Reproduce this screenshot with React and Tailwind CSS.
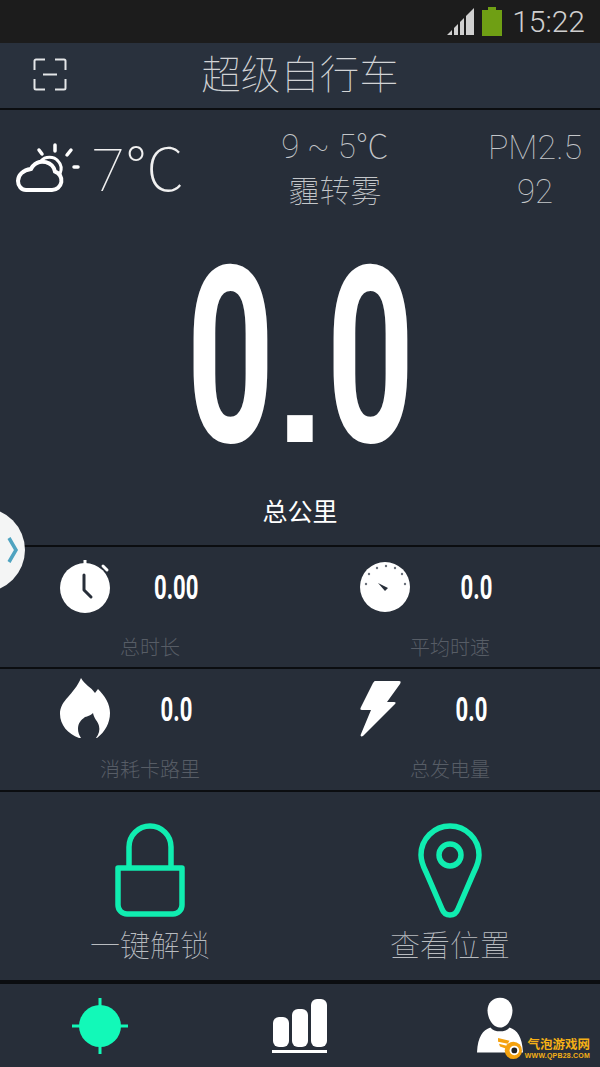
const cjk = "font-['Roboto','Noto_Sans_CJK_SC',sans-serif]"

function ScanIcon() {
  return (
    <svg width="34" height="33" viewBox="0 0 34 33" fill="none" stroke="#e4e6e8" strokeWidth="2">
      <path d="M12 1.500H3A1.500 1.500 0 0 0 1.500 3v9M22 1.500h9A1.500 1.500 0 0 1 32.500 3v9M12 31.500H3A1.500 1.500 0 0 1 1.500 30v-9M22 31.500h9a1.500 1.500 0 0 0 1.500-1.500v-9M10 16.500h14" />
    </svg>
  )
}

function WeatherIcon() {
  return (
    <svg width="66" height="52" viewBox="0 0 66 52" fill="none" stroke="#fff" strokeLinecap="round">
      <path d="M11 48h26a9.500 9.500 0 0 0 3-18.500C38 20 25 16 18 24c-1 1-1.500 2-2 3C8 28 3 33 3 39c0 5 3.500 9 8 9z" strokeWidth="4" />
      <path d="M26 19c4-5 13-5 17 0 3 3 4 8 2 13" strokeWidth="3" />
      <path d="M40 3v6M24 8l3 4M56 8l-4 5M59 25h4" strokeWidth="3.500" />
    </svg>
  )
}

function StopwatchIcon() {
  return (
    <svg width="52" height="54" viewBox="0 0 52 54" fill="none">
      <circle cx="26" cy="28" r="25" fill="#fff" />
      <path d="M26 0v4" stroke="#fff" strokeWidth="3" />
      <path d="M44 6l4 4" stroke="#fff" strokeWidth="3" strokeLinecap="round" />
      <path d="M25 15v15l7 7" stroke="#272e39" strokeWidth="3" strokeLinecap="round" strokeLinejoin="round" />
    </svg>
  )
}

function GaugeIcon() {
  const dots = [[7, 22], [10, 12], [18, 6], [27, 4], [36, 6], [43, 12], [46, 22]]
  return (
    <svg width="52" height="50" viewBox="0 0 52 50">
      <circle cx="26" cy="25" r="25" fill="#fff" />
      {dots.map(([x, y]) => (
        <circle key={x} cx={x} cy={y} r="1.200" fill="#6a707a" />
      ))}
      <path d="M19 21l10 5-3 3z" fill="#272e39" />
    </svg>
  )
}

function FlameIcon() {
  return (
    <svg width="50" height="60" viewBox="0 0 50 60" fill="#fff">
      <path fillRule="evenodd" d="M21 0c4 7 10 9 14 15l3-4c7 7 12 15 12 24 0 10-5 19-13 25h-1c3-4 4-8 3-12-1-5-5-7-6-13-3 3-5 3-8 4-4 3-7 6-7 12 0 3 1 6 3 9h-2C8 56 0 47 0 36 0 22 14 17 21 0z" />
    </svg>
  )
}

function BoltIcon() {
  return (
    <svg width="41" height="57" viewBox="0 0 41 57" fill="#fff">
      <path d="M15 1h24c2 0 2 1 1 3L27 22h7c2 0 2 1 1 2L3 56c-2 1-3 0-2-2l10-24H2c-2 0-2-1-1-3L13 3c1-1 1-2 2-2z" />
    </svg>
  )
}

function LockIcon() {
  return (
    <svg width="70" height="94" viewBox="0 0 70 94" fill="none" stroke="#10edb0" strokeWidth="5.500" strokeLinejoin="round">
      <path d="M14 45V24a21 21 0 0 1 42 0v21" />
      <path d="M3 45h64v37a9 9 0 0 1-9 9H12a9 9 0 0 1-9-9z" />
    </svg>
  )
}

function PinIcon() {
  return (
    <svg width="64" height="96" viewBox="0 0 64 96" fill="none" stroke="#10edb0" strokeWidth="5.500">
      <path d="M32 3C16 3 3 16 3 32c0 6 2 11 5 17l16 37c3 8 13 8 16 0l16-37c3-6 5-11 5-17C61 16 48 3 32 3z" />
      <circle cx="32" cy="32" r="11" />
    </svg>
  )
}

function TargetIcon() {
  return (
    <svg width="56" height="56" viewBox="0 0 56 56" fill="#12f9b8">
      <circle cx="28" cy="28" r="21" />
      <path d="M26.500 0h3v56h-3zM0 26.500h56v3H0z" />
    </svg>
  )
}

function BarsIcon() {
  return (
    <svg width="56" height="56" viewBox="0 0 56 56" fill="#fff">
      <rect x="1" y="19" width="16" height="30" rx="6" />
      <rect x="20" y="11" width="16" height="38" rx="6" />
      <rect x="39" y="1" width="16" height="48" rx="6" />
      <rect x="0" y="52" width="55" height="3" />
    </svg>
  )
}

function PersonIcon() {
  return (
    <svg width="46" height="59" viewBox="0 0 48 60" fill="#fff">
      <path d="M24 0c8 0 13 6 13 13 0 8-5 18-13 18S11 21 11 13C11 6 16 0 24 0z" />
      <path d="M14 31c2 3 6 4 10 4s8-1 10-4c8 3 13 9 14 26H0C1 40 6 34 14 31z" />
    </svg>
  )
}

function Watermark() {
  return (
    <div className="absolute right-[10px] bottom-[7px] flex items-center gap-[2px]">
      <svg width="25" height="23" viewBox="0 0 26 24">
        <path d="M0 1l12 3-2 3L0 5zM1 7l8 2-1 3-6-2z" fill="#f5a20f" />
        <circle cx="16" cy="14" r="9" fill="#f5a20f" />
        <circle cx="17" cy="14" r="5" fill="#fff" />
        <circle cx="17" cy="14" r="3" fill="#222" />
      </svg>
      <div className="flex flex-col items-end">
        <span className={`${cjk} text-[12.500px] leading-[14px] font-bold whitespace-nowrap text-[#f5b016]`}>气泡游戏网</span>
        <span className="font-['Liberation_Sans',sans-serif] text-[7px] leading-[8px] font-bold tracking-[0.2px] whitespace-nowrap text-[#f5b016]">WWW.QPB28.COM</span>
      </div>
    </div>
  )
}

const stats = [
  { icon: <StopwatchIcon />, value: '0.00', label: '总时长', pad: 'pl-[59px]', iconTop: 'pt-[13px]' },
  { icon: <GaugeIcon />, value: '0.0', label: '平均时速', pad: 'pl-[59px]', iconTop: 'pt-[15px]' },
  { icon: <FlameIcon />, value: '0.0', label: '消耗卡路里', pad: 'pl-[59px]', iconTop: 'pt-[9px]' },
  { icon: <BoltIcon />, value: '0.0', label: '总发电量', pad: 'pl-[54px]', iconTop: 'pt-[11px]' },
]

function StatCell({ stat, height }) {
  return (
    <div className={`flex flex-col ${height}`}>
      <div className={`flex h-[87px] items-start ${stat.pad}`}>
        <div className={`flex w-[52px] shrink-0 justify-center ${stat.iconTop}`}>{stat.icon}</div>
        <div className="ml-[35px] flex h-[80px] w-[60px] items-center justify-center">
          <span className="origin-center scale-x-[0.65] font-['Roboto',sans-serif] text-[34px] leading-none font-bold whitespace-nowrap text-white">
            {stat.value}
          </span>
        </div>
      </div>
      <div className={`${cjk} text-center text-[20px] leading-[28px] font-light text-[#575d66]`}>{stat.label}</div>
    </div>
  )
}

export default function App() {
  return (
    <div className="relative flex h-[1067px] w-[600px] flex-col overflow-hidden bg-[#272e39] text-white">
      {/* status bar */}
      <div className="flex h-[43px] items-center justify-end bg-[#1c1c1c] pr-[15px]">
        <svg width="28" height="28" viewBox="0 0 28 28" fill="#d0d0d0" className="mt-[1px]">
          <path d="M0 27l5-5v5zM7 20l4-4v11H7zM13 14l4-4v17h-4zM19 8l8-8v27h-8z" />
        </svg>
        <div className="ml-[7px] flex flex-col items-center">
          <div className="h-[3px] w-[8px] bg-[#6f9f14]" />
          <div className="h-[26px] w-[20px] bg-[#6f9f14]" />
        </div>
        <span className="ml-[10px] font-['Roboto',sans-serif] text-[30px] leading-none font-light text-[#cfcfcf]">15:22</span>
      </div>

      {/* title */}
      <div className="relative flex h-[65px] items-center justify-center bg-[#29313d]">
        <div className="absolute top-[15px] left-[33px]">
          <ScanIcon />
        </div>
        <span className={`${cjk} text-[39.500px] leading-none font-thin text-[#d2d4d6]`}>超级自行车</span>
      </div>
      <div className="h-[2px] bg-[#0b0d10]" />

      {/* weather + total */}
      <div className="flex h-[435px] flex-col">
        <div className="grid h-[100px] grid-cols-[220px_230px_150px] pt-[18px]">
          <div className="flex items-start pt-[14px] pl-[15px]">
            <WeatherIcon />
            <span className={`${cjk} ml-[11px] -mt-[7px] text-[60px] leading-[72px] font-thin whitespace-nowrap text-[#f0f0f0]`}>
              7℃
            </span>
          </div>
          <div className={`${cjk} flex flex-col items-center text-[#c4c7ca]`}>
            <span className="text-[33px] leading-[38px] font-thin whitespace-nowrap">9 ~ 5℃</span>
            <span className="mt-[7px] text-[31px] leading-[38px] font-thin">霾转雾</span>
          </div>
          <div className={`${cjk} flex flex-col items-center pl-[20px] text-[#c4c7ca]`}>
            <span className="text-[34px] leading-[38px] font-thin">PM2.5</span>
            <span className="mt-[7px] text-[33px] leading-[38px] font-thin">92</span>
          </div>
        </div>
        <div className="mt-[33px] flex h-[230px] items-baseline justify-center leading-[230px] font-bold whitespace-nowrap text-white">
          <span className="flex w-[105px] origin-center scale-x-[0.62] justify-center font-['Roboto',sans-serif] text-[247px]">0</span>
          <span className="flex w-[35px] justify-center font-['Liberation_Sans',sans-serif] text-[180px]">.</span>
          <span className="flex w-[105px] origin-center scale-x-[0.62] justify-center font-['Roboto',sans-serif] text-[247px]">0</span>
        </div>
        <div className={`${cjk} mt-[25px] text-center text-[25px] leading-[30px] font-normal text-white`}>总公里</div>
      </div>
      <div className="h-[2px] bg-[#0b0d10]" />

      {/* stats */}
      <div className="grid grid-cols-2">
        <StatCell stat={stats[0]} height="h-[120px]" />
        <StatCell stat={stats[1]} height="h-[120px]" />
      </div>
      <div className="h-[2px] bg-[#0b0d10]" />
      <div className="grid grid-cols-2">
        <StatCell stat={stats[2]} height="h-[121px]" />
        <StatCell stat={stats[3]} height="h-[121px]" />
      </div>
      <div className="h-[2px] bg-[#0b0d10]" />

      {/* actions */}
      <div className="grid h-[188px] grid-cols-2">
        <div className="flex flex-col items-center pt-[31px]">
          <LockIcon />
          <span className={`${cjk} mt-[11px] text-[30px] leading-[36px] font-thin text-[#b9bcc0]`}>一键解锁</span>
        </div>
        <div className="flex flex-col items-center pt-[31px]">
          <PinIcon />
          <span className={`${cjk} mt-[9px] text-[30px] leading-[36px] font-thin text-[#b9bcc0]`}>查看位置</span>
        </div>
      </div>
      <div className="h-[4px] bg-[#0b0d10]" />

      {/* tabs */}
      <div className="grid flex-1 grid-cols-3">
        <div className="flex justify-center pt-[14px]"><TargetIcon /></div>
        <div className="flex justify-center pt-[14px]"><BarsIcon /></div>
        <div className="flex justify-center pt-[13px]"><PersonIcon /></div>
      </div>

      <Watermark />

      {/* side drawer handle */}
      <div className="absolute top-[508px] -left-[59px] flex h-[84px] w-[84px] items-center justify-end rounded-full bg-[#f4f5f5] pr-[6px]">
        <svg width="12" height="26" viewBox="0 0 12 26" fill="none" stroke="#4fa3c0" strokeWidth="3.500">
          <path d="M2 1l7 12-7 12" />
        </svg>
      </div>
    </div>
  )
}
